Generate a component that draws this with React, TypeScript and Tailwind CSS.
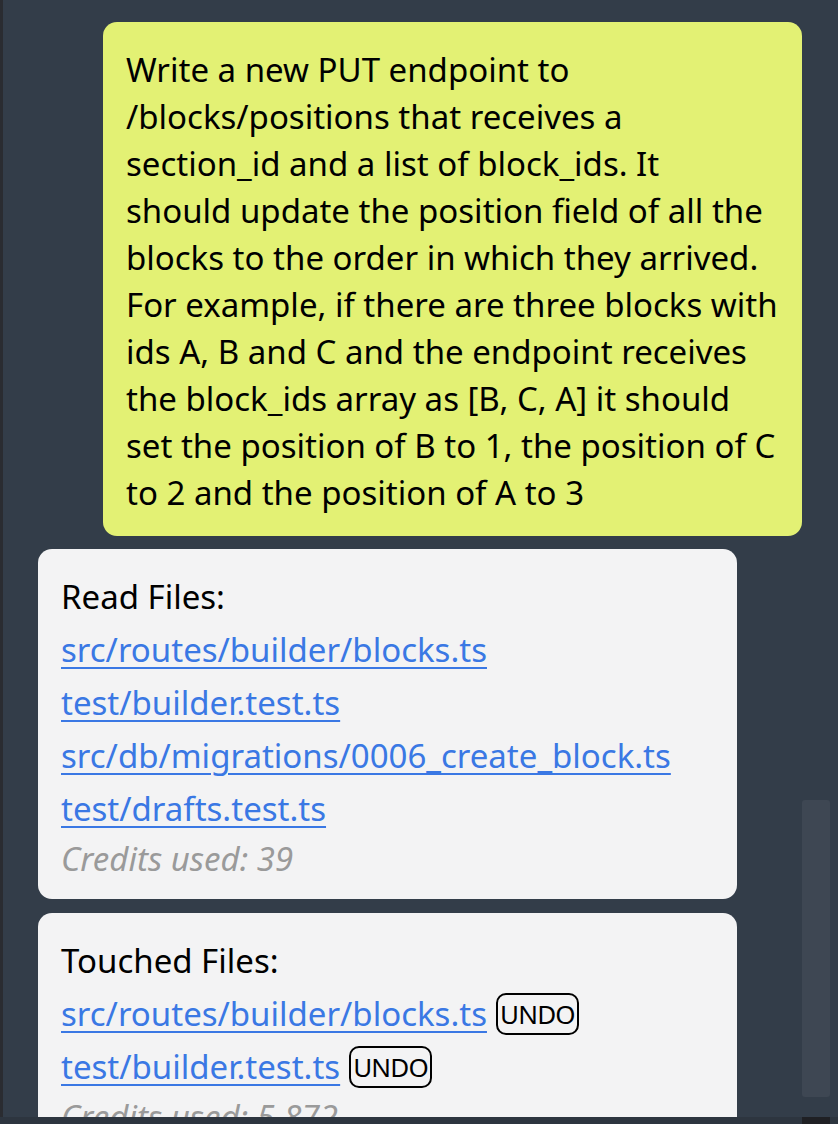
import React from 'react';

const font = { fontFamily: '"Noto Sans", Lato, sans-serif' };

const promptLines = [
  'Write a new PUT endpoint to',
  '/blocks/positions that receives a',
  'section_id and a list of block_ids. It',
  'should update the position field of all the',
  'blocks to the order in which they arrived.',
  'For example, if there are three blocks with',
  'ids A, B and C and the endpoint receives',
  'the block_ids array as [B, C, A] it should',
  'set the position of B to 1, the position of C',
  'to 2 and the position of A to 3',
];

const Undo = () => (
  <span className="ml-[9px] inline-flex h-[42px] items-center rounded-[10px] border-2 border-black px-[2px] text-[26px] leading-none tracking-[-0.8px] text-black">
    UNDO
  </span>
);

const FileLink = ({ path, undo }: { path: string; undo?: boolean }) => (
  <div className="flex items-center leading-[47px]">
    <a href="#" className="text-[#3a78e4] underline decoration-2 underline-offset-[5px]">
      {path}
    </a>
    {undo && <Undo />}
  </div>
);

const FilesCard = ({ title, files, credits, undo }: { title: string; files: string[]; credits: string; undo?: boolean }) => (
  <div className="w-[699px] rounded-[14px] bg-[#f3f3f4] px-[23px] pt-[24px] pb-[17px] text-[33px]">
    <div className="flex flex-col gap-[6px]">
      <div className="leading-[47px] text-black">{title}</div>
      {files.map((f) => (
        <FileLink key={f} path={f} undo={undo} />
      ))}
      <div className="-mt-[3px] leading-[47px] italic text-[#9a9a9a]">Credits used: {credits}</div>
    </div>
  </div>
);

export default function App() {
  return (
    <div className="relative h-[1124px] w-[838px] overflow-hidden bg-[#333d49]" style={font}>
      <div className="absolute left-0 top-0 h-full w-[3px] bg-[#2a2c31]" />
      <div className="ml-[38px] flex w-[764px] flex-col pt-[22px]">
        <div className="self-end w-[699px] rounded-[14px] bg-[#e3f174] px-[23px] pt-[24px] pb-[20px] text-[33px] leading-[47px] text-black">
          {promptLines.map((l, i) => (
            <div key={i} className="whitespace-nowrap">{l}</div>
          ))}
        </div>
        <div className="mt-[13px] flex flex-col gap-[14px]">
          <FilesCard
            title="Read Files:"
            files={[
              'src/routes/builder/blocks.ts',
              'test/builder.test.ts',
              'src/db/migrations/0006_create_block.ts',
              'test/drafts.test.ts',
            ]}
            credits="39"
          />
          <FilesCard
            title="Touched Files:"
            files={['src/routes/builder/blocks.ts', 'test/builder.test.ts']}
            credits="5,872"
            undo
          />
        </div>
      </div>
      <div className="absolute left-[802px] top-[800px] h-[297px] w-[28px] rounded-[3px] bg-[#3e4753]" />
      <div className="absolute bottom-0 left-0 h-[7px] w-full bg-[#2d353f]" />
      <div className="absolute bottom-0 left-[802px] h-[7px] w-[28px] bg-[#1f2024]" />
    </div>
  );
}
